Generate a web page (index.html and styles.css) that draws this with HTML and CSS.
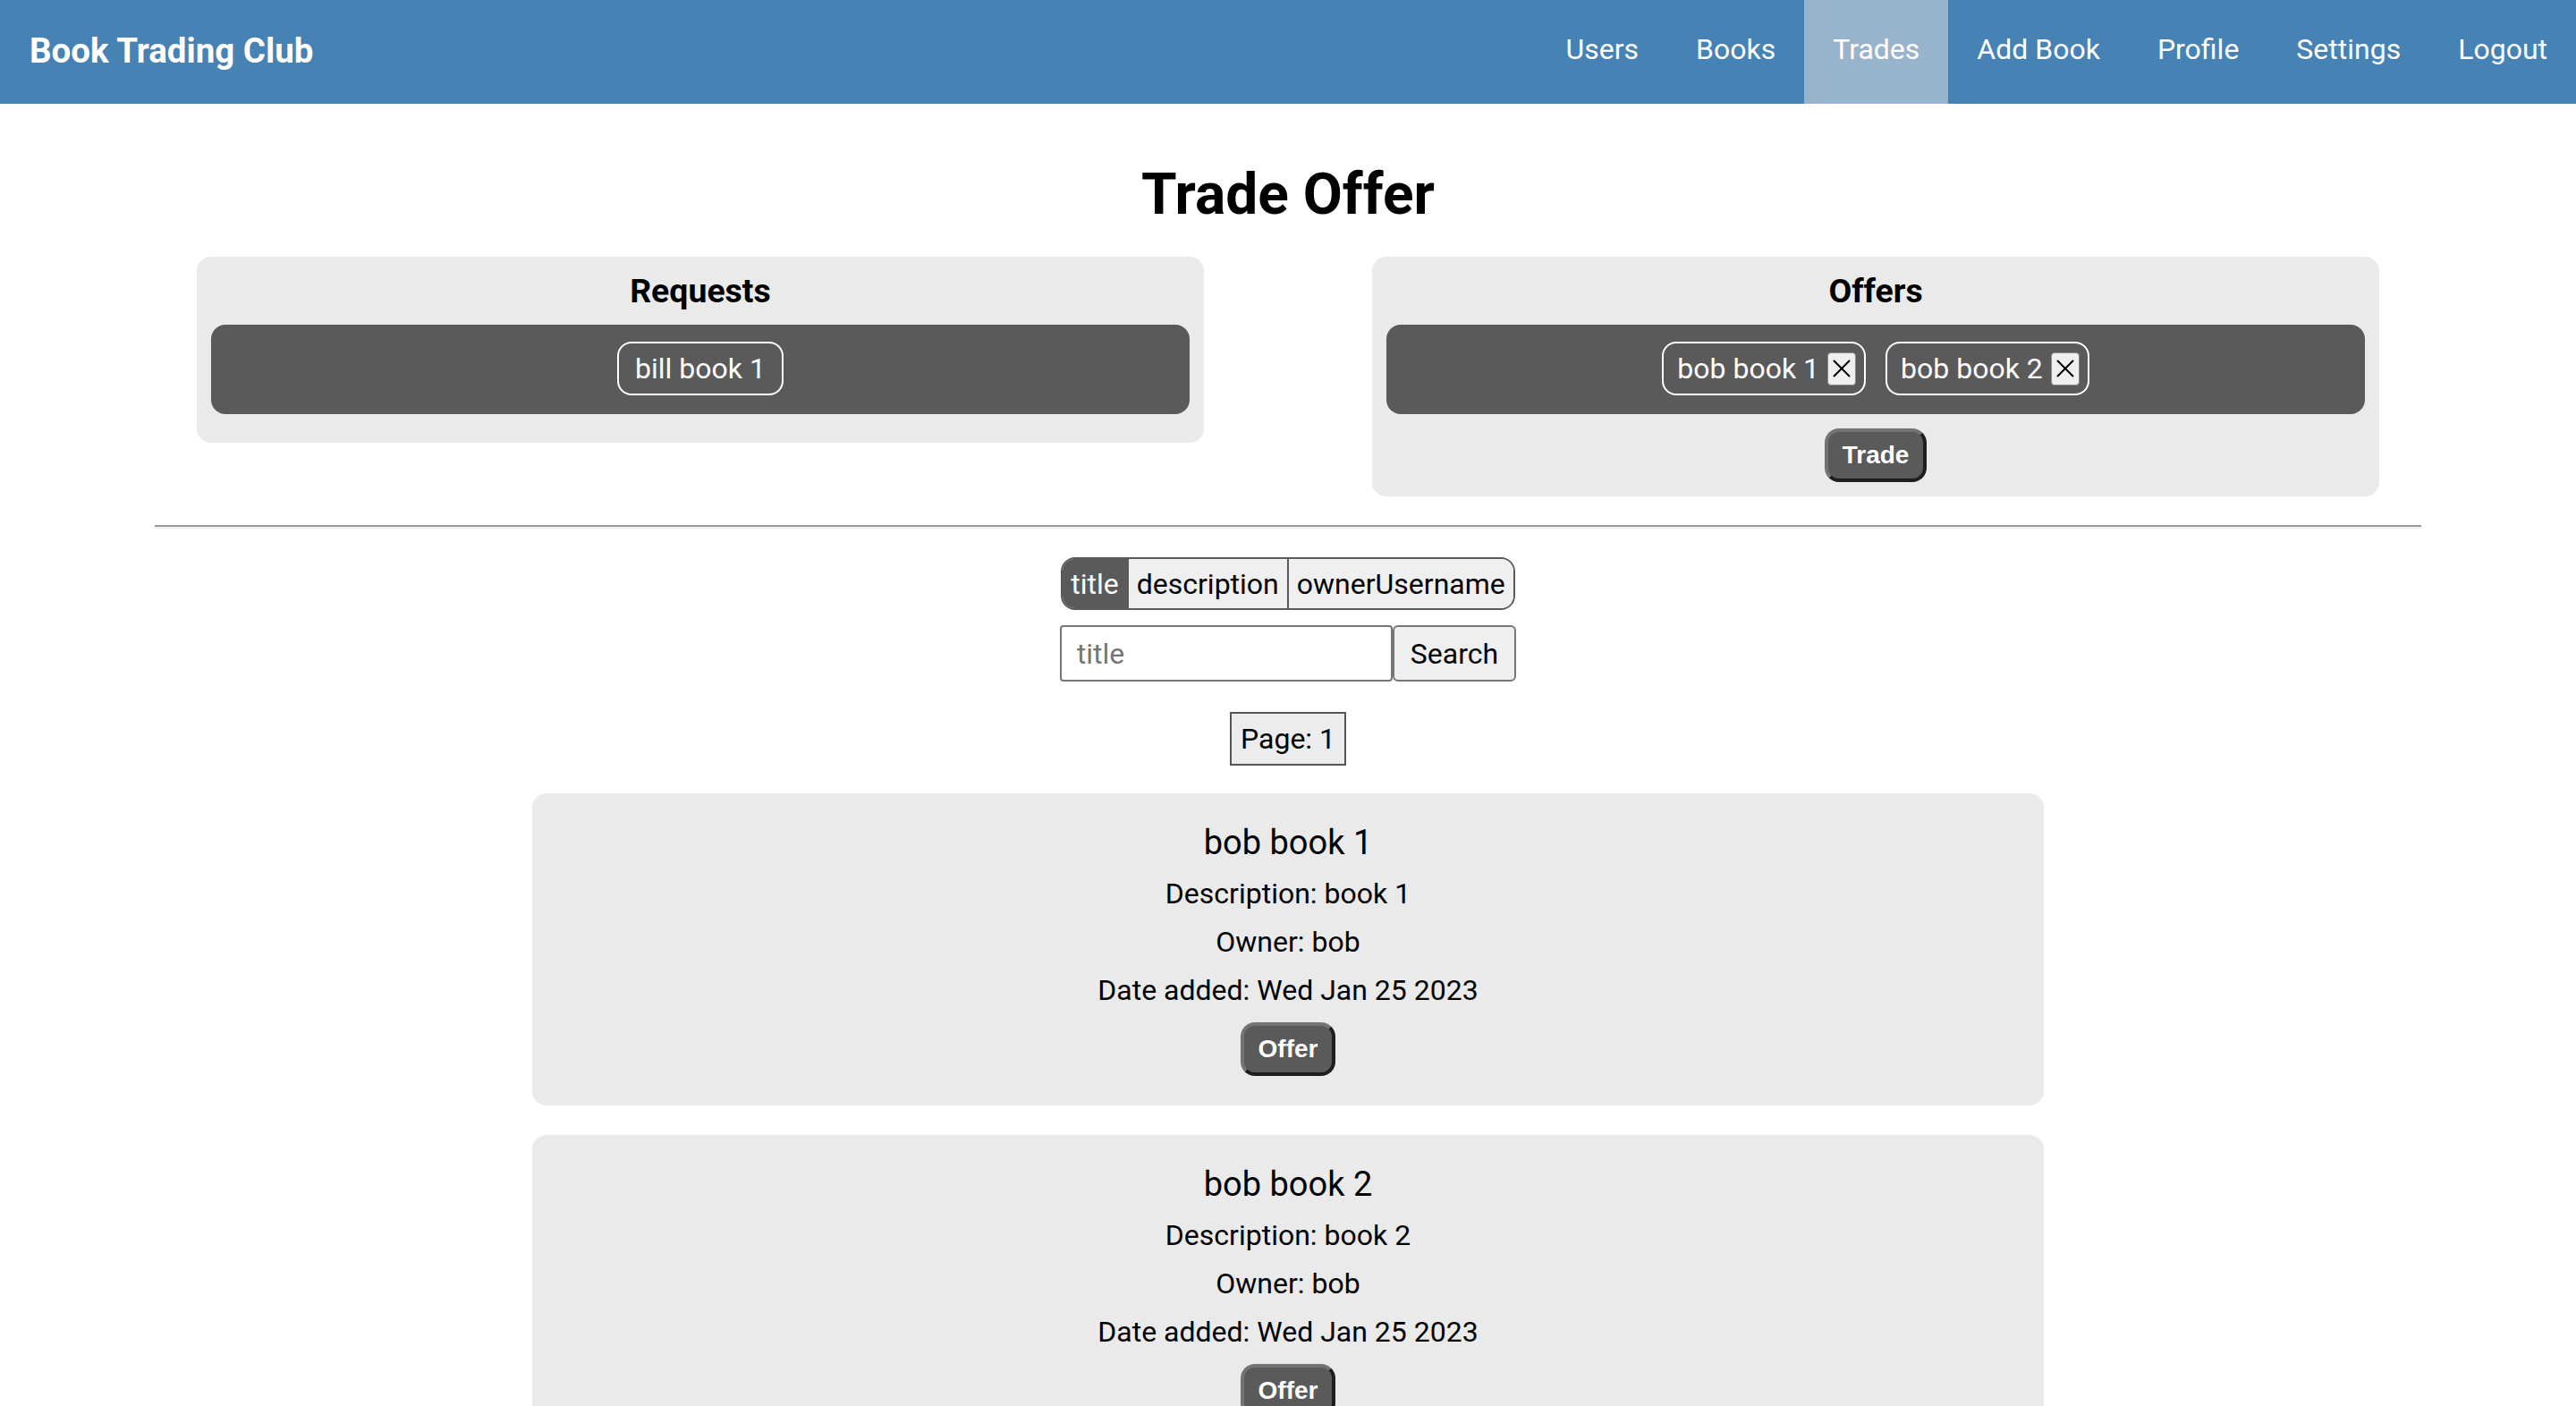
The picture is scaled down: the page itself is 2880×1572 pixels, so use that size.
FILE: index.html
```html
<!DOCTYPE html>
<html lang="en">
<head>
<meta charset="utf-8">
<title>Book Trading Club</title>
<link rel="stylesheet" href="styles.css">
</head>
<body>
<nav class="navbar">
  <a class="brand" href="#">Book Trading Club</a>
  <div class="nav-links">
    <a class="nav-link" href="#">Users</a>
    <a class="nav-link" href="#">Books</a>
    <a class="nav-link active" href="#">Trades</a>
    <a class="nav-link" href="#">Add Book</a>
    <a class="nav-link" href="#">Profile</a>
    <a class="nav-link" href="#">Settings</a>
    <a class="nav-link" href="#">Logout</a>
  </div>
</nav>

<main class="page">
  <h1 class="page-title">Trade Offer</h1>

  <section class="trade-row">
    <div class="trade-box trade-box-requests">
      <h3 class="box-title">Requests</h3>
      <div class="chip-bar">
        <span class="chip">bill book 1</span>
      </div>
    </div>
    <div class="trade-box">
      <h3 class="box-title">Offers</h3>
      <div class="chip-bar">
        <span class="chip chip-removable">bob book 1
          <button class="chip-x" type="button" aria-label="remove">
            <svg viewBox="0 0 20 20" width="20" height="20"><path d="M1 1 L19 19 M19 1 L1 19" stroke="#000" stroke-width="2" fill="none"/></svg>
          </button>
        </span>
        <span class="chip chip-removable">bob book 2
          <button class="chip-x" type="button" aria-label="remove">
            <svg viewBox="0 0 20 20" width="20" height="20"><path d="M1 1 L19 19 M19 1 L1 19" stroke="#000" stroke-width="2" fill="none"/></svg>
          </button>
        </span>
      </div>
      <button class="dark-btn" type="button">Trade</button>
    </div>
  </section>

  <hr class="divider">

  <section class="search">
    <div class="toggle-group">
      <button class="toggle active" type="button">title</button>
      <button class="toggle" type="button">description</button>
      <button class="toggle" type="button">ownerUsername</button>
    </div>
    <div class="search-row">
      <input class="search-input" type="text" placeholder="title">
      <button class="search-btn" type="button">Search</button>
    </div>
    <div class="page-indicator">Page: 1</div>
  </section>

  <section class="book-list">
    <article class="book-card">
      <h3 class="book-title">bob book 1</h3>
      <p class="book-line">Description: book 1</p>
      <p class="book-line">Owner: bob</p>
      <p class="book-line">Date added: Wed Jan 25 2023</p>
      <button class="dark-btn" type="button">Offer</button>
    </article>
    <article class="book-card">
      <h3 class="book-title">bob book 2</h3>
      <p class="book-line">Description: book 2</p>
      <p class="book-line">Owner: bob</p>
      <p class="book-line">Date added: Wed Jan 25 2023</p>
      <button class="dark-btn" type="button">Offer</button>
    </article>
  </section>
</main>
</body>
</html>
```

FILE: styles.css
```css
* { box-sizing: border-box; }

html, body {
  margin: 0;
  padding: 0;
  background: #ffffff;
}

body {
  font-family: Roboto, "Liberation Sans", Arial, sans-serif;
  font-size: 32px;
  color: #000;
}

/* ---------- navbar ---------- */
.navbar {
  display: flex;
  justify-content: space-between;
  align-items: stretch;
  height: 116px;
  background: #4682b4;
}

.brand {
  display: flex;
  align-items: center;
  padding: 0 32px 4px 33px;
  color: #fff;
  font-size: 38.5px;
  font-weight: 700;
  text-decoration: none;
}

.nav-links {
  display: flex;
  align-items: stretch;
}

.nav-link {
  display: flex;
  align-items: center;
  padding: 0 32px 6px 32px;
  color: #fff;
  font-size: 32px;
  text-decoration: none;
}

.nav-link.active {
  background: #98b3cc;
}

/* ---------- page ---------- */
.page {
  margin: 0 32px;
}

.page-title {
  margin: 64px 0 32px;
  text-align: center;
  font-size: 64px;
  font-weight: 700;
  line-height: 75px;
}

/* ---------- trade boxes ---------- */
.trade-row {
  display: flex;
  justify-content: space-evenly;
  align-items: flex-start;
}

.trade-box {
  width: 40%;
  background: #eaeaea;
  border-radius: 16px;
  padding: 16px;
  display: flex;
  flex-direction: column;
  align-items: center;
  gap: 16px;
}

.trade-box-requests {
  padding-bottom: 32px;
}

.box-title {
  margin: 0;
  font-size: 37.44px;
  font-weight: 700;
  line-height: 44px;
}

.chip-bar {
  align-self: stretch;
  background: #5a5a5a;
  border-radius: 16px;
  padding: 19px 16px 21px;
  display: flex;
  justify-content: center;
  flex-wrap: wrap;
  gap: 22px;
}

.chip {
  display: inline-flex;
  align-items: center;
  height: 60px;
  padding: 0 18px;
  border: 2px solid #fff;
  border-radius: 16px;
  color: #fff;
  font-size: 32px;
  line-height: 37px;
}

.chip-removable {
  padding: 0 9px 0 15px;
  gap: 9px;
}

.chip-x {
  display: inline-flex;
  align-items: center;
  justify-content: center;
  width: 32px;
  height: 37px;
  padding: 0;
  background: #efefef;
  border: 1px solid #8a8a8a;
  border-radius: 4px;
}

.chip-x svg {
  display: block;
}

.dark-btn {
  background: #5a5a5a;
  color: #fff;
  font-family: "Liberation Sans", Arial, Helvetica, sans-serif;
  font-size: 28px;
  font-weight: 700;
  line-height: 32px;
  padding: 10px 16px;
  border: 4px solid;
  border-color: #737373 #1e1e1e #1e1e1e #737373;
  border-radius: 16px;
  cursor: pointer;
}

/* ---------- divider ---------- */
.divider {
  width: 90%;
  margin: 32px auto;
  height: 0;
  border: 0;
  border-top: 2px solid #9a9a9a;
  border-bottom: 2px solid #eeeeee;
}

/* ---------- search ---------- */
.search {
  display: flex;
  flex-direction: column;
  align-items: center;
}

.toggle-group {
  display: inline-flex;
  border: 2px solid #5a5a5a;
  border-radius: 16px;
  overflow: hidden;
}

.toggle {
  height: 55px;
  padding: 0 9px;
  background: #efefef;
  color: #000;
  border: 0;
  border-left: 2px solid #5a5a5a;
  font-family: Roboto, "Liberation Sans", Arial, sans-serif;
  font-size: 32px;
}

.toggle:first-child {
  border-left: 0;
}

.toggle.active {
  background: #5a5a5a;
  color: #fff;
}

.search-row {
  display: flex;
  margin-top: 17px;
}

.search-input {
  width: 372px;
  height: 63px;
  padding: 0 17px;
  border: 2px solid #767676;
  border-radius: 4px;
  font-family: Roboto, "Liberation Sans", Arial, sans-serif;
  font-size: 32px;
  color: #000;
  background: #fff;
}

.search-input::placeholder {
  color: #757575;
}

.search-btn {
  height: 63px;
  padding: 0 18px;
  background: #efefef;
  border: 2px solid #767676;
  border-radius: 6px;
  font-family: Roboto, "Liberation Sans", Arial, sans-serif;
  font-size: 32px;
  color: #000;
}

.page-indicator {
  margin-top: 34px;
  height: 60px;
  padding: 0 10px;
  display: flex;
  align-items: center;
  border: 2px solid #555;
  background: #ececec;
  font-size: 32px;
}

/* ---------- book list ---------- */
.book-list {
  display: flex;
  flex-direction: column;
  align-items: center;
  gap: 33px;
  margin-top: 31px;
}

.book-card {
  width: 60%;
  background: #eaeaea;
  border-radius: 16px;
  padding: 33px 32px;
  display: flex;
  flex-direction: column;
  align-items: center;
  gap: 16px;
}

.book-title {
  margin: 0;
  font-size: 38px;
  font-weight: 400;
  line-height: 44px;
}

.book-line {
  margin: 0;
  font-size: 32px;
  line-height: 38px;
}

.book-card .dark-btn {
  margin-top: 1px;
}
```
